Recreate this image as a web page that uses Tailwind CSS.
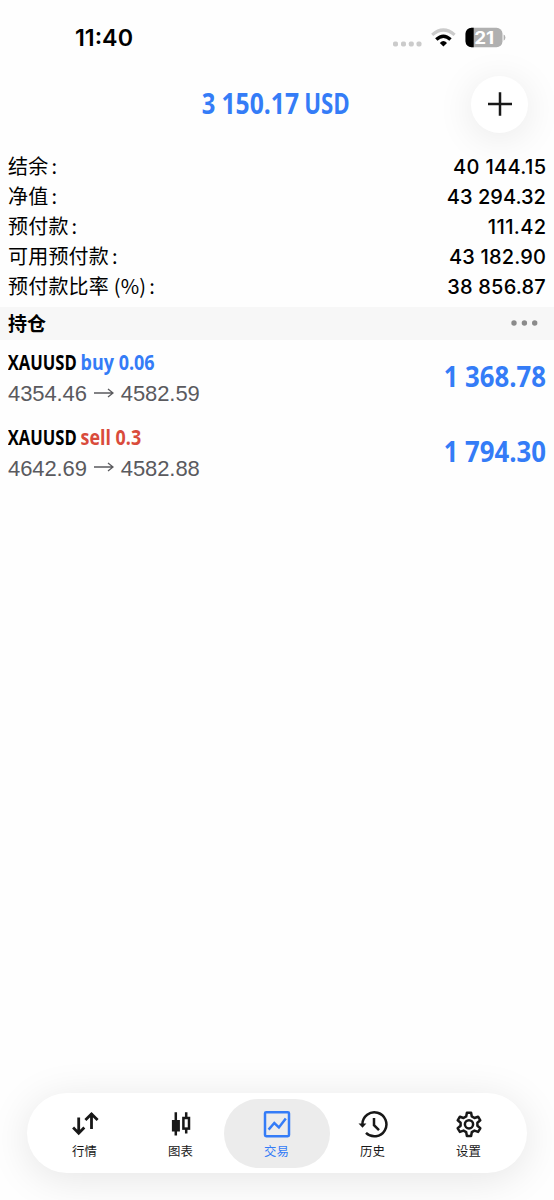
<!DOCTYPE html>
<html lang="zh-CN">
<head>
<meta charset="utf-8">
<title>交易</title>
<script src="https://cdn.jsdelivr.net/npm/@tailwindcss/browser@4"></script>
</head>
<body class="bg-[#fefefe]">
<div class="relative flex h-[1200px] w-[554px] flex-col overflow-hidden bg-[#fefefe] font-['Inter','Noto_Sans_CJK_SC',sans-serif] text-black">
  <!-- Status bar -->
  <div class="flex h-[75px] shrink-0 items-center justify-between pl-[75px] pr-[48px]">
    <svg class="h-[30px] w-[60px]" viewBox="0 0 60 30"><text x="0" y="23" font-size="22.5" font-weight="600" textLength="58" lengthAdjust="spacingAndGlyphs">11:40</text></svg>
    <svg class="h-[30px] w-[114px]" viewBox="392 22.5 114 30">
      <g fill="#cbcbcb"><rect x="393" y="41" width="5" height="5" rx="1.8"/><rect x="401" y="41" width="5" height="5" rx="1.8"/><rect x="408.8" y="41" width="5" height="5" rx="1.8"/><rect x="416.5" y="41" width="5" height="5" rx="1.8"/></g>
      <path d="M432.2 34.4Q443.4 24.6 454.6 34.4" fill="none" stroke="#cbcbcb" stroke-width="3.2"/>
      <path d="M436.3 39Q443.4 32.4 450.5 39" fill="none" stroke="#000" stroke-width="3.4"/>
      <path d="M439.8 42.4Q443.4 38.8 447 42.4L443.4 46Z"/>
      <rect x="465.5" y="27.3" width="37" height="19.5" rx="6" fill="#b0b0b0"/>
      <path d="M473.7 27.3H471.5A6 6 0 0 0 465.5 33.3V40.8A6 6 0 0 0 471.5 46.8H473.7Z"/>
      <path d="M503.6 34Q505.4 34.7 505.4 37T503.6 40.2Z" fill="#b0b0b0"/>
      <text x="474.2" y="43.4" font-size="17" font-weight="700" fill="#fff" textLength="20" lengthAdjust="spacingAndGlyphs">21</text>
    </svg>
  </div>

  <!-- Floating profit and new order button -->
  <header class="flex h-[76px] shrink-0 items-start justify-end pr-[26px]">
    <svg class="mr-[120px] mt-[10px] h-[36px] w-[150px] overflow-visible font-['Open_Sans',sans-serif]" viewBox="202 85 150 36" font-size="28.5" font-weight="700" fill="#347cf7"><text x="202.8" y="114"><tspan textLength="13.6" lengthAdjust="spacingAndGlyphs">3</tspan><tspan x="222.5" textLength="77.5" lengthAdjust="spacingAndGlyphs">150.17</tspan><tspan x="305.3" textLength="45.5" lengthAdjust="spacingAndGlyphs">USD</tspan></text></svg>
    <button class="mt-px flex size-[57px] items-center justify-center rounded-full bg-white shadow-[0_5px_38px_rgba(0,0,0,0.09)]">
      <svg class="mb-px size-[24px]" viewBox="0 0 24 24" fill="none" stroke="#181818" stroke-width="2.5"><path d="M0 12H24M12 .2V23.8"/></svg>
    </button>
  </header>

  <!-- Account summary -->
  <dl class="flex h-[155.5px] shrink-0 flex-col px-2 text-[20px] leading-[30px]">
    <div class="flex h-[30px] justify-between"><dt class="font-['Noto_Sans_CJK_SC',sans-serif] tracking-[0.2px]">结余<span class="ml-[3px]">:</span></dt><dd class="translate-y-[0.6px] font-medium tracking-[0.35px] -mr-[0.4px]">40 144.15</dd></div>
    <div class="flex h-[30px] justify-between"><dt class="font-['Noto_Sans_CJK_SC',sans-serif] tracking-[0.2px]">净值<span class="ml-[3px]">:</span></dt><dd class="translate-y-[0.6px] font-medium tracking-[0.05px]">43 294.32</dd></div>
    <div class="flex h-[30px] justify-between"><dt class="font-['Noto_Sans_CJK_SC',sans-serif] tracking-[0.2px]">预付款<span class="ml-[3px]">:</span></dt><dd class="translate-y-[0.6px] font-medium tracking-[0.35px] -mr-[0.4px]">111.42</dd></div>
    <div class="flex h-[30px] justify-between"><dt class="font-['Noto_Sans_CJK_SC',sans-serif] tracking-[0.2px]">可用预付款<span class="ml-[3px]">:</span></dt><dd class="translate-y-[0.6px] font-medium tracking-[0.15px]">43 182.90</dd></div>
    <div class="flex h-[30px] justify-between"><dt class="font-['Noto_Sans_CJK_SC',sans-serif] tracking-[0.2px]">预付款比率 (%)<span class="ml-[3px]">:</span></dt><dd class="translate-y-[0.6px] font-medium tracking-[0.2px]">38 856.87</dd></div>
  </dl>

  <!-- Positions -->
  <div class="flex h-[33.5px] shrink-0 items-center justify-between bg-[#f7f7f7] pl-2 pr-4 font-['Noto_Sans_CJK_SC',sans-serif]">
    <h2 class="pb-px text-[19px] font-bold leading-[32px]">持仓</h2>
    <svg class="h-[6px] w-[27px]" viewBox="0 0 27 6" fill="#8b8b8b"><circle cx="3" cy="3" r="2.7"/><circle cx="13.4" cy="3" r="2.7"/><circle cx="23.7" cy="3" r="2.7"/></svg>
  </div>
  <ul class="flex flex-col font-['Open_Sans',sans-serif]">
    <li class="flex h-[74.7px] justify-between px-2">
      <div class="flex flex-col">
        <svg class="h-[38px] w-[200px]" viewBox="8 340 200 38" font-size="21.7" font-weight="700"><text x="7.7" y="370.3"><tspan textLength="69" lengthAdjust="spacingAndGlyphs">XAUUSD</tspan><tspan x="80.6" fill="#347cf7" textLength="74" lengthAdjust="spacingAndGlyphs">buy 0.06</tspan></text></svg>
        <div class="flex h-[31px] items-center font-['Liberation_Sans',sans-serif] text-[22px] tracking-[-0.1px] text-[#5a5a5e]"><span>4354.46</span><svg class="mx-[7px] mb-[2px] h-[12px] w-[20px]" viewBox="0 0 20 12" fill="none" stroke="currentColor" stroke-width="1.3"><path d="M0 6H19M14 2L19 6L14 10"/></svg><span>4582.59</span></div>
      </div>
      <svg class="h-[60px] w-[104px] overflow-visible" viewBox="442 340 104 60" font-size="29.3" font-weight="700" fill="#347cf7"><text x="443.8" y="386.9"><tspan textLength="14.4" lengthAdjust="spacingAndGlyphs">1</tspan><tspan x="465" textLength="81" lengthAdjust="spacingAndGlyphs">368.78</tspan></text></svg>
    </li>
    <li class="flex h-[74.7px] justify-between px-2">
      <div class="flex flex-col">
        <svg class="h-[38px] w-[200px]" viewBox="8 340 200 38" font-size="21.7" font-weight="700"><text x="7.7" y="370.3"><tspan textLength="69" lengthAdjust="spacingAndGlyphs">XAUUSD</tspan><tspan x="80.6" fill="#d94b3b" textLength="60.5" lengthAdjust="spacingAndGlyphs">sell 0.3</tspan></text></svg>
        <div class="flex h-[31px] items-center font-['Liberation_Sans',sans-serif] text-[22px] tracking-[-0.1px] text-[#5a5a5e]"><span>4642.69</span><svg class="mx-[7px] mb-[2px] h-[12px] w-[20px]" viewBox="0 0 20 12" fill="none" stroke="currentColor" stroke-width="1.3"><path d="M0 6H19M14 2L19 6L14 10"/></svg><span>4582.88</span></div>
      </div>
      <svg class="h-[60px] w-[104px] overflow-visible" viewBox="442 340 104 60" font-size="29.3" font-weight="700" fill="#347cf7"><text x="443.8" y="386.9"><tspan textLength="14.4" lengthAdjust="spacingAndGlyphs">1</tspan><tspan x="465" textLength="81" lengthAdjust="spacingAndGlyphs">794.30</tspan></text></svg>
    </li>
  </ul>

  <!-- Tab bar -->
  <nav class="mx-[27px] mb-[27px] mt-auto flex h-[80px] shrink-0 items-center justify-center rounded-full bg-white pl-[5px] pr-[6px] font-['Noto_Sans_CJK_SC',sans-serif] text-[12.4px] font-normal leading-[18px] text-[#181818] shadow-[0_6px_42px_rgba(0,0,0,0.10)]">
    <a class="-mr-[10px] flex h-[69px] w-[106px] shrink-0 flex-col items-center pt-[10px]">
      <svg class="size-[30px]" viewBox="0 0 30 30" fill="none" stroke="currentColor" stroke-width="2.8"><path d="M8.7 8.5V25M3.1 18.6L8.7 24.2L14.3 18.6M21.5 20V4M15.4 11L21.5 4.9L27.6 11"/></svg>
      <span class="mt-[3px]">行情</span>
    </a>
    <a class="-mr-[10px] flex h-[69px] w-[106px] shrink-0 flex-col items-center pt-[10px]">
      <svg class="size-[30px]" viewBox="0 0 30 30" fill="none" stroke="currentColor" stroke-width="2.5"><path d="M9.8 3.2V26.5M20.2 3.2V8M20.2 20V24.5"/><rect x="5.9" y="11" width="8" height="11.5" fill="currentColor" stroke="none"/><rect x="17.4" y="9" width="5.6" height="10.6"/></svg>
      <span class="mt-[3px]">图表</span>
    </a>
    <a class="flex h-[69px] w-[106px] shrink-0 flex-col items-center rounded-full bg-[#ececec] pt-[10px] text-[#347cf7]">
      <svg class="size-[30px]" viewBox="0 0 30 30" fill="none" stroke="currentColor" stroke-width="2.5"><rect x="3" y="3.2" width="24" height="24" rx="1.2"/><path d="M6.6 20.6L12.3 14L16.9 18.4L23.8 9.4"/></svg>
      <span class="mt-[3px]">交易</span>
    </a>
    <a class="-ml-[10px] flex h-[69px] w-[106px] shrink-0 flex-col items-center pt-[10px]">
      <svg class="size-[30px]" viewBox="0 0 30 30" fill="none" stroke="currentColor" stroke-width="2.5"><path d="M4.4 15.2A12 12 0 1 1 8 23.9"/><path d="M.5 14.4H8.4L4.5 18.7Z" fill="currentColor" stroke="none"/><path d="M16 9V16.2L21 21.2"/></svg>
      <span class="mt-[3px]">历史</span>
    </a>
    <a class="-ml-[10px] flex h-[69px] w-[106px] shrink-0 flex-col items-center pt-[10px]">
      <svg class="size-[30px]" viewBox="0 -.3 30 30" fill="none" stroke="currentColor" stroke-width="2.5" stroke-linejoin="round"><path d="M12.9 3.4H17.1L17.8 7.1L20.5 8.7L24.1 7.4L26.3 11L23.4 13.5V16.5L26.3 19L24.1 22.6L20.5 21.3L17.8 22.9L17.1 26.6H12.9L12.2 22.9L9.5 21.3L5.9 22.6L3.7 19L6.6 16.5V13.5L3.7 11L5.9 7.4L9.5 8.7L12.2 7.1Z"/><circle cx="15" cy="15" r="4.1"/></svg>
      <span class="mt-[3px]">设置</span>
    </a>
  </nav>
</div>
</body>
</html>
